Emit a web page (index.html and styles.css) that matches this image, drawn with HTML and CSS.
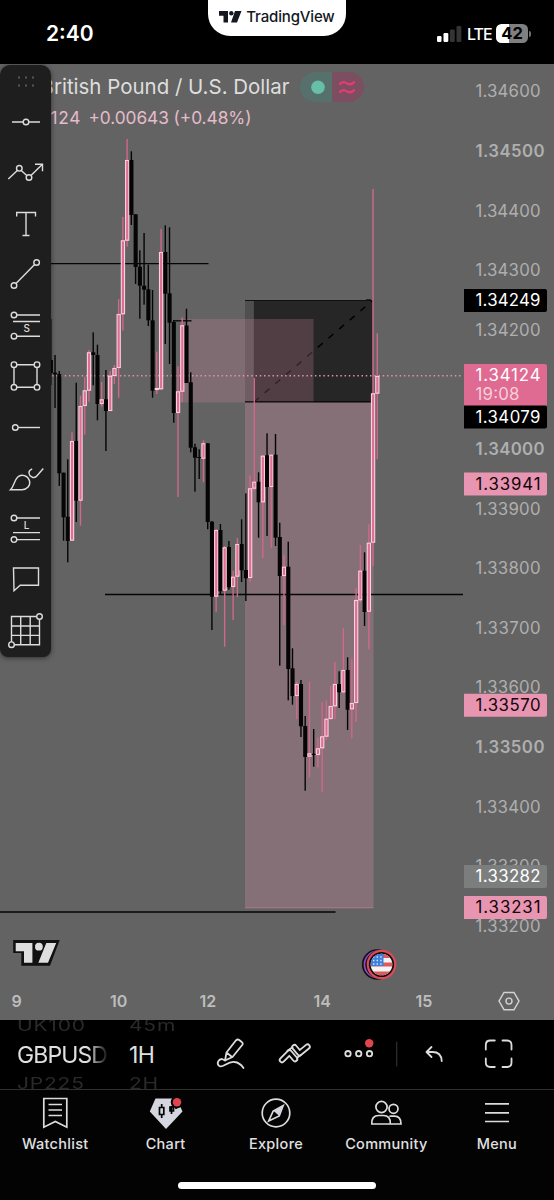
FILE: index.html
```html
<!DOCTYPE html>
<html lang="en">

<head>
    <meta charset="utf-8">
    <title>GBPUSD</title>
    <link rel="stylesheet" href="styles.css">
</head>

<body>
    <header class="status">
        <div class="clock">2:40</div>
        <div class="pill">
            <svg width="23" height="12" viewBox="0 0 23 12"><path d="M0 0h9v11.500H4.500V4.800H0zM16 0h6.500L18 11.500h-6z" /><circle cx="12.300" cy="2.300" r="2.200" /></svg>
            <span>TradingView</span>
        </div>
        <div class="signal">
            <svg width="26" height="16" viewBox="0 0 26 16"><rect x="0" y="10" width="4.500" height="6" rx="1.200" /><rect x="6.500" y="7" width="4.800" height="9" rx="1.200" /><rect x="13" y="3.500" width="4.800" height="12.500" rx="1.200" class="off" /><rect x="19.500" y="0" width="4.800" height="16" rx="1.200" class="off" /></svg>
            <span class="lte">LTE</span>
            <span class="battery">42</span>
            <span class="nub"></span>
        </div>
    </header>

    <main class="chart">
        <svg id="plot" width="554" height="955" viewBox="0 65 554 955">
            <!-- zones -->
            <rect x="245" y="402" width="128.500" height="506" fill="rgba(212,142,169,.3)" />
            <path d="M245 907.800h128.500" stroke="#a87a8a" stroke-width="1" />
            <rect x="253.500" y="300" width="119" height="102" fill="#262626" />
            <rect x="245" y="300" width="8.500" height="102" fill="#4f4f4f" />
            <path d="M245 300.500h127M366 299.800h5" stroke="#111" />
            <path d="M254 402L372 301" stroke="#000" stroke-width="1.500" stroke-dasharray="6.500 7.500" />
            <rect x="180" y="319" width="133.500" height="83.500" fill="rgba(207,137,160,.25)" />
            <g stroke="#050505" stroke-width="1.300">
                <path d="M245 401.800h127" />
                <path d="M51 263.700h157.500" />
                <path d="M173 320.800h18.500" />
                <path d="M105 594.500h358" />
                <path d="M0 912h335.500" />
            </g>
            <path d="M52 375.700h411" class="dots" />
            <g id="candles"></g>
            <g id="axis"></g>

            <g class="dates">
                <text x="16.700" y="1007">9</text>
                <text x="118.700" y="1007">10</text>
                <text x="207.800" y="1007">12</text>
                <text x="322.300" y="1007">14</text>
                <text x="424" y="1007">15</text>
            </g>
            <g class="gear">
                <path d="M504 992.500h10l5 8.600-5 8.600h-10l-5-8.600z" />
                <circle cx="509" cy="1001.100" r="3" />
            </g>

            <!-- watermark -->
            <path d="M13.200 940h46.500L50 965.700H21.300V953h-8.100z" fill="#111" />
            <path d="M15.700 943h16.700v19.700H24v-11.500h-8.300zM46.300 943h9.900L48 962.700h-9.700z" fill="#dedede" />
            <circle cx="38.900" cy="946.700" r="3.900" fill="#dedede" />

            <!-- news and event markers -->
            <circle cx="377.200" cy="964.500" r="15.300" fill="#111" />
            <circle cx="377.500" cy="964.500" r="13" fill="none" stroke="#8e4bc4" stroke-width="1.800" />
            <circle cx="380" cy="964.500" r="14.300" fill="#111" />
            <circle cx="381.500" cy="964.500" r="14.800" fill="#e04a58" />
            <circle cx="381.500" cy="964.500" r="12.600" fill="#111" />
            <clipPath id="flag"><circle cx="381.500" cy="964.500" r="10.800" /></clipPath>
            <g clip-path="url(#flag)">
                <rect x="370" y="953" width="23" height="23" fill="#f4f4f4" />
                <path d="M370 956h23M370 964.500h23M370 973.500h23" stroke="#dc5a5f" stroke-width="4" />
                <rect x="370" y="953" width="13.500" height="13" fill="#3f7fdc" />
                <path d="M373 957h10M373 960.500h10M373 964h10" stroke="#dce8fa" stroke-width="1.400" stroke-dasharray="1.400 2.200" />
            </g>

            <!-- symbol legend -->
            <g class="legend">
                <text x="40.500" y="94.300" textLength="249" lengthAdjust="spacingAndGlyphs" class="name">British Pound / U.S. Dollar</text>
                <text x="14.500" y="124.200" textLength="66" class="change">1.34124</text>
                <text x="88.500" y="124.200" textLength="163" class="change">+0.00643 (+0.48%)</text>
            </g>
            <path d="M332 72h-17a15 15 0 0 0 0 30h17z" fill="#56706b" />
            <path d="M332 72h17a15 15 0 0 1 0 30h-17z" fill="#7b4f5f" />
            <circle cx="318" cy="87.200" r="6.800" fill="#68bfa8" />
            <path d="M339.500 84.500c3-4 5.500-2.500 7.800-1s4.500 1.500 7.400-2M339.500 92.500c3-4 5.500-2.500 7.800-1s4.500 1.500 7.400-2" fill="none" stroke="#e73a72" stroke-width="2.400" />
        </svg>

        <aside class="tools">
            <div class="grip"><svg width="51" height="33"><path d="M18 12.500h16M18 20.500h16" /></svg></div>
            <svg viewBox="0 0 51 50.8"><path d="M12 25h11M29 25h11" /><circle cx="26" cy="25" r="2.800" /></svg>
            <svg viewBox="0 0 51 50.8"><path d="M8.300 31l9-8.500M21.300 22.500l5.700 5.200M31.200 27.300l11-10.800M35 16.300h7.500v7" /><circle cx="19.300" cy="20.300" r="2.800" /><circle cx="29" cy="29.500" r="2.800" /></svg>
            <svg viewBox="0 0 51 50.8"><path d="M16.700 17.500v-4h18.800v4M26 13.500v23M22.500 36.500h7" /></svg>
            <svg viewBox="0 0 51 50.8"><path d="M16 34.500l18.600-19" /><circle cx="36.600" cy="13.500" r="2.800" /><circle cx="14" cy="36.500" r="2.800" /></svg>
            <svg viewBox="0 0 51 50.8"><path d="M17 15h23M13 21.500h27M17 36.200h23" /><circle cx="14" cy="15" r="2.800" /><circle cx="14" cy="36.200" r="2.800" /><text x="26.700" y="32.500">S</text></svg>
            <svg viewBox="0 0 51 50.8"><path d="M17 13.700h17M17 36.300h17M14 16.500v17M37 16.500v17" /><circle cx="14" cy="13.700" r="2.800" /><circle cx="37" cy="13.700" r="2.800" /><circle cx="14" cy="36.300" r="2.800" /><circle cx="37" cy="36.300" r="2.800" /></svg>
            <svg viewBox="0 0 51 50.8"><path d="M18.300 25.500H40" /><circle cx="15.300" cy="25.500" r="2.800" /></svg>
            <svg viewBox="0 0 51 50.8"><path d="M10.500 36.700c3.500-3 3.500-9 7-12.500 4-4 10.500-1.500 12 3.500 1.300 5-2.500 9-7.500 9zM32.200 15.800c-5 2-3.500 6.500-.5 8 2 1.200 4 .7 5.300-1l6.300-7.300" /></svg>
            <svg viewBox="0 0 51 50.8"><path d="M17 15h23M13 29.600h27M17 36.600h23" /><circle cx="14" cy="15" r="2.800" /><circle cx="14" cy="36.600" r="2.800" /><text x="26.700" y="26">L</text></svg>
            <svg viewBox="0 0 51 50.8"><path d="M13.500 14h25v17.200H20.200l-6.200 5.500z" /></svg>
            <svg viewBox="0 0 51 50.8"><path d="M36.500 11.500H11.500V37M14 39.700h25.500V14.500M20.700 11.500v28M30.200 11.500v28M11.500 21h28M11.500 30.400h28" /><circle cx="39.500" cy="11.500" r="2.800" /><circle cx="11.500" cy="39.700" r="2.800" /></svg>
        </aside>
    </main>

    <section class="bar">
        <div class="wheel symbol"><i>UK100</i><b>GBPUSD</b><i>JP225</i></div>
        <div class="wheel interval"><i>45m</i><b>1H</b><i>2H</i></div>
        <svg class="actions" width="354" height="69" viewBox="200 1020 354 69">
            <path d="M225 1060.500l1.500-8 9.500-12.200q1.500-1.500 3.200-.3l2.500 2q1.800 1.300.5 3L232.500 1057zM226.500 1052.500l5.500 4.500M225 1060.500l-3-1.500c-3.500 0-5.500 4-3.300 6.500 3.300 4 8.300-4.500 15.800-3.500 5 .5 7 3 9 6" />
            <!-- chevrons: wide light stroke with a dark core -->
            <path d="M282 1060l7.500-7.500 5.500 6.500M294.500 1047.200l5 6 8-6.500" class="outer" />
            <path d="M282 1060l7.500-7.500 5.500 6.500M294.500 1047.200l5 6 8-6.500" class="inner" />
            <path d="M287.500 1050.800l5-3.500M297 1057.800l3.500-2.600" />
            <circle cx="348" cy="1053.700" r="2.700" /><circle cx="358.700" cy="1053.700" r="2.700" /><circle cx="369.500" cy="1053.700" r="2.700" />
            <circle cx="369.200" cy="1043.300" r="4.200" class="red" />
            <path d="M396.700 1042v24" class="sep" />
            <path d="M431.500 1047l-5 5 5 5M426.500 1052h6q8.800 0 9.200 9" />
            <path d="M485.800 1049.500v-4.500q0-4.500 4.500-4.500h4.500M502.500 1040.500h4.500q4.500 0 4.500 4.500v4.500M511.500 1058.500v4q0 4.500-4.500 4.500h-4.500M494.800 1067h-4.500q-4.500 0-4.500-4.500v-4" />
        </svg>
    </section>

    <nav class="tabs">
        <a><svg viewBox="0 0 34 34"><path d="M5.800 2.500h23v28.700L17.300 25.500 5.800 31.200zM10.500 8.500h13.500M10.500 14h13.500M10.500 19.500h13.500" /></svg>Watchlist</a>
        <a><svg viewBox="0 0 34 34"><path d="M6.500 2.500h21l6 13L17 33 .8 15.500z" class="solid" /><path d="M10.500 11.500h4.300v7h-4.300zM12.700 8v3.500M12.700 18.500v3.500M22.500 10v8M21 11h3.500v4H21zM27 10v3" class="cut" /><circle cx="28" cy="6.200" r="6.200" fill="#030303" stroke="none" /><circle cx="28" cy="6.200" r="4.200" class="red" /></svg>Chart</a>
        <a><svg viewBox="0 0 34 34"><circle cx="17" cy="17" r="13.800" /><path d="M24.200 9.500l-4 10.500-10.500 5 4.500-10z" /><path d="M24.200 9.500l-4.500 10-5-4.500z" class="solid" /></svg>Explore</a>
        <a><svg viewBox="0 0 34 34"><circle cx="12.500" cy="11" r="5.600" /><circle cx="24.500" cy="12.800" r="4.500" /><path d="M2.800 28q-.5-8.500 7-8.500h4.500q7.500 0 7 8.500zM20.500 20.200h5q6.500 0 6.500 7.800H22" /></svg>Community</a>
        <a><svg viewBox="0 0 34 34"><path d="M5 7.800h24M5 16.800h24M5 25.500h24" /></svg>Menu</a>
    </nav>
    <div class="home"></div>

    <script src="chart.js"></script>
</body>

</html>
```
FILE: styles.css
```css
body {
    margin: 0;
    width: 554px;
    height: 1200px;
    overflow: hidden;
    background: #030303;
    color: #e0e0e0;
    font-family: Inter, "Liberation Sans", sans-serif;
}
svg {
    display: block;
}
/* status bar */
.status {
    display: grid;
    grid-template-columns: 208px 138px 208px;
    height: 64px;
    background: #000;
    color: #fff;
}
.clock {
    padding: 20px 0 0 46px;
    font-size: 21px;
    line-height: 27px;
    font-weight: 600;
}
.pill {
    display: flex;
    align-items: center;
    justify-content: center;
    gap: 4px;
    height: 36px;
    box-sizing: border-box;
    padding-bottom: 3px;
    border-radius: 0 0 22px 22px;
    background: #fff;
    color: #131722;
    fill: #131722;
    font-size: 15px;
    font-weight: 500;
    letter-spacing: -0.15px;
}
.signal {
    display: flex;
    align-items: center;
    height: 19px;
    padding: 24px 0 0 91px;
    fill: #fff;
}
.off {
    fill: #343434;
}
.lte {
    margin-left: 4px;
    width: 25px;
    font-size: 16px;
    font-weight: 500;
    letter-spacing: -1px;
}
.battery {
    margin-left: 4px;
    width: 32px;
    height: 19px;
    border-radius: 5.5px;
    background: linear-gradient(90deg, #fff 42%, #808080 42%);
    color: #000;
    font-size: 16.5px;
    line-height: 19px;
    font-weight: 700;
    text-align: center;
}
.nub {
    margin-left: 1px;
    width: 2px;
    height: 6px;
    border-radius: 0 2px 2px 0;
    background: #707070;
}
/* chart */
.chart {
    position: relative;
    height: 955px;
    padding-top: 1px;
    background: #636363;
}
.dots {
    stroke: #e48fab;
    stroke-width: 1.5;
    stroke-dasharray: 1.5 2.74;
}
.legend text {
    font-size: 20.5px;
    fill: #dedede;
}
.legend .change {
    font-size: 17.3px;
    fill: #e5bccb;
}
.dates text {
    fill: #bdbdbd;
    font-size: 16px;
    font-weight: 600;
    text-anchor: middle;
}
.gear {
    fill: none;
    stroke: #d2d2d2;
    stroke-width: 1.4;
}
#axis text {
    font-size: 16.8px;
    fill: #afafaf;
}
#axis .major {
    font-weight: 600;
}
/* drawing tools */
.tools {
    position: absolute;
    left: 0;
    top: 1px;
    width: 51px;
    height: 592px;
    border-radius: 10px 10px 8px 8px;
    background: #1e1e1e;
    box-shadow: 0 1px 5px rgba(0, 0, 0, .5);
}
.tools svg {
    width: 51px;
    height: 50.8px;
    fill: none;
    stroke: #dcdcdc;
    stroke-width: 1.4;
}
.tools .grip svg {
    height: 32px;
    stroke: #585858;
    stroke-width: 2;
    stroke-dasharray: 2 5;
}
.tools text {
    fill: #dcdcdc;
    stroke: none;
    font-size: 10px;
    font-weight: 500;
    text-anchor: middle;
}
/* symbol bar */
.bar {
    display: flex;
    height: 69px;
    background: #000;
    border-bottom: 1px solid #303030;
}
.wheel {
    display: flex;
    flex-direction: column;
    justify-content: center;
    overflow: hidden;
    flex: none;
}
.wheel b {
    font-size: 23px;
    line-height: 34px;
    font-weight: 400;
}
.wheel i {
    font-size: 21px;
    line-height: 24px;
    font-style: normal;
    letter-spacing: 0.8px;
    color: #2a2a2a;
    transform: scaleY(.75);
}
.symbol {
    width: 90px;
    padding-left: 17px;
    -webkit-mask-image: linear-gradient(90deg, #000 82%, transparent 102%);
    mask-image: linear-gradient(90deg, #000 82%, transparent 102%);
}
.symbol b {
    letter-spacing: -0.9px;
}
.interval {
    width: 71px;
    padding-left: 22px;
}
.interval b {
    letter-spacing: -0.6px;
}
.actions {
    fill: none;
    stroke: #dcdcdc;
    stroke-width: 1.8;
    stroke-linejoin: round;
    stroke-linecap: round;
}
.outer {
    stroke-width: 6.4;
}
.inner {
    stroke: #000;
    stroke-width: 2.8;
}
.red {
    fill: #e0444e;
    stroke: none;
}
.sep {
    stroke: #303030;
    stroke-width: 1.2;
}
/* bottom tabs */
.tabs {
    display: flex;
    width: 552px;
    height: 92px;
}
.tabs a {
    flex: 1 0 0;
    display: flex;
    flex-direction: column;
    align-items: center;
    padding-top: 6px;
    font-size: 14.5px;
    line-height: 28px;
    font-weight: 500;
    letter-spacing: 0.3px;
}
.tabs svg {
    width: 34px;
    height: 34px;
    overflow: visible;
    fill: none;
    stroke: #dcdcdc;
    stroke-width: 1.7;
}
.tabs .solid {
    fill: #d5d7e0;
    stroke: none;
}
.tabs .cut {
    stroke: #030303;
}
.tabs .red {
    fill: #e0444e;
    stroke: none;
}
.home {
    width: 198px;
    height: 7px;
    margin: 0 auto;
    border-radius: 4px;
    background: #fff;
}
```
FILE: chart.js
```js
// high, body top, body bottom, low, 1 = bullish
var candles = [
    [319, 360, 373, 385, 0],
    [355, 372.700, 374.300, 408, 0],
    [371, 374, 473.300, 486, 0],
    [472.700, 472.700, 517.300, 540.700, 0],
    [459.300, 516.700, 541, 562.300, 0],
    [432.300, 441, 540.700, 540.700, 1],
    [382.700, 441, 500.700, 522, 0],
    [395.700, 406, 500.700, 525.700, 1],
    [376.700, 390.300, 406, 434.700, 1],
    [350, 352.300, 390.700, 401.700, 1],
    [332.300, 352.300, 355, 385.300, 0],
    [344.700, 355, 404, 420.300, 0],
    [382, 399.300, 404, 406.700, 1],
    [370, 399.300, 411, 451, 0],
    [370.700, 375.700, 411, 411, 1],
    [365, 368, 376, 384, 1],
    [299, 314, 368, 397.700, 1],
    [217, 240.300, 314.300, 330.700, 1],
    [139, 160, 240.700, 246.700, 1],
    [151.300, 160, 215, 225, 0],
    [214.300, 214.300, 267, 284, 0],
    [250.300, 266.700, 285.700, 318.700, 0],
    [233, 285.700, 289.700, 304.700, 0],
    [264.700, 289.300, 320.300, 326, 0],
    [290, 320.300, 390.700, 397.700, 0],
    [351.700, 388, 390, 394, 1],
    [229, 252, 389.300, 390, 1],
    [225.300, 252, 293.700, 344, 0],
    [227.300, 293.300, 322.700, 364, 0],
    [320.700, 322, 413, 422.700, 0],
    [366.300, 391.300, 413, 497, 1],
    [317.300, 325.300, 391.700, 402.300, 1],
    [308.700, 325.500, 383, 383, 0],
    [372.300, 382.300, 447.700, 452.300, 0],
    [443.700, 447.300, 457.700, 491.700, 0],
    [449.300, 457, 458, 479, 0],
    [440.300, 443.300, 458.700, 482.300, 1],
    [443.300, 443.300, 522, 529.300, 0],
    [521, 521.700, 596.700, 630, 0],
    [529.300, 530, 596.700, 612, 1],
    [524, 530, 591.300, 594.700, 0],
    [546, 547.300, 590.700, 646.700, 1],
    [541, 547, 587.300, 589.700, 0],
    [570.700, 576.700, 587, 620, 1],
    [538, 544, 576.700, 597, 1],
    [519.300, 544, 570.300, 582, 0],
    [493.300, 570, 578.300, 601, 0],
    [475.300, 488.300, 578, 581.700, 1],
    [378, 481.700, 488.700, 490.700, 1],
    [472.300, 481.700, 502.300, 537.700, 0],
    [455, 455.700, 502.300, 558, 1],
    [433.300, 455.300, 487, 536, 0],
    [454.300, 454.700, 487, 547.700, 1],
    [434, 454.700, 537.700, 546, 0],
    [522.700, 537, 576, 665.700, 0],
    [555.300, 566.700, 576, 625, 1],
    [541.700, 566.700, 669, 700.300, 0],
    [648.300, 668.300, 696, 704.700, 0],
    [681.700, 684, 696, 719, 1],
    [680, 684, 726.300, 737, 0],
    [716, 726, 757, 790.700, 0],
    [681.700, 753.300, 756.700, 777.300, 1],
    [729, 753.700, 755, 766.700, 0],
    [737.700, 748.300, 755, 767.300, 1],
    [702, 736.300, 748.300, 792, 1],
    [700.300, 718.700, 736.700, 740.300, 1],
    [686, 706, 719, 720, 1],
    [662, 684, 706.300, 719.300, 1],
    [671.300, 684, 692.300, 708, 0],
    [628.300, 670, 692.300, 693.300, 1],
    [657.300, 670, 709.700, 730, 0],
    [659.300, 703, 709.300, 738.300, 1],
    [588.300, 600, 703, 722, 1],
    [545, 570.700, 600.300, 602.700, 1],
    [552.300, 570.700, 612, 626, 0],
    [524.300, 542.700, 611.700, 649.300, 1],
    [189, 393.300, 542.700, 566, 1],
    [333.300, 376, 393.700, 459.300, 1]
];

function rect(x, y, w, h, attrs) {
    return '<rect x="' + x.toFixed(2) + '" y="' + y.toFixed(2) + '" width="' + w + '" height="' + h.toFixed(2) + '" ' + attrs + '/>';
}

var out = '';
candles.forEach(function (c, i) {
    var x = 50.8 + i * 4.24;
    out += rect(x - 0.7, c[0], 1.4, c[3] - c[0], c[4] ? 'fill="#d0688a"' : 'fill="#050505"');
    var h = Math.max(c[2] - c[1], 1);
    if (c[4]) {
        out += rect(x - 1.55, c[1] + 0.5, 3.2, Math.max(h - 1, 1), 'fill="#df6f93" stroke="#fbd0de" stroke-width="1.1"');
    } else {
        out += rect(x - 2, c[1], 4.1, h, 'fill="#050505"');
    }
});
document.getElementById('candles').innerHTML = out;

// price scale, one step every 0.001
var axis = '';
for (var i = 0; i <= 14; i++) {
    var price = (1.346 - i * 0.001).toFixed(5);
    var major = i % 5 == 1;
    var y = 91.7 + i * 59.6 + 5.7;
    axis += '<text x="475.5" y="' + y.toFixed(1) + '" textLength="' + (major ? 69 : 65) + '"' + (major ? ' class="major"' : '') + '>' + price + '</text>';
}

// price, top, height, background, text colour
var labels = [
    ['1.34249', 289, 23, '#000', '#fff'],
    ['1.34124', 364, 42, '#df6b92', '#fff'],
    ['1.34079', 405.500, 23, '#000', '#fff'],
    ['1.33941', 472.500, 23, '#e895b2', '#14060b'],
    ['1.33570', 693.700, 23, '#e895b2', '#14060b'],
    ['1.33282', 865, 23, '#7c7e7d', '#fff'],
    ['1.33231', 896, 23, '#e895b2', '#14060b']
];
labels.forEach(function (l) {
    axis += '<path d="M464 ' + l[1] + 'h81q2 0 2 2v' + (l[2] - 4) + 'q0 2-2 2h-81z" fill="' + l[3] + '"/>';
    axis += '<text x="475.5" y="' + (l[1] + 17.3) + '" textLength="65" style="fill:' + l[4] + '">' + l[0] + '</text>';
});
axis += '<text x="475.5" y="400" textLength="44" style="fill:#f7cedb">19:08</text>';
document.getElementById('axis').innerHTML = axis;
```
